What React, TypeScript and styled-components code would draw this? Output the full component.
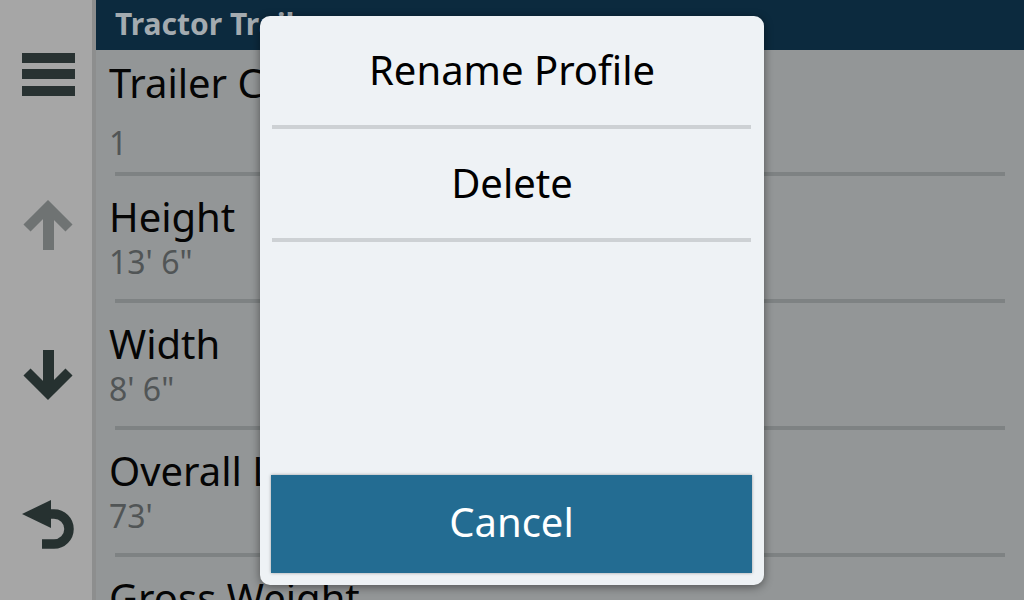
import React from 'react';
import styled, { createGlobalStyle } from 'styled-components';

const GlobalStyle = createGlobalStyle`
  html, body {
    margin: 0;
    padding: 0;
    background: #939697;
  }
  body {
    font-family: "Noto Sans", "DejaVu Sans", sans-serif;
  }
`;

type Field = { label: string; value: string };

const fields: Field[] = [
  { label: 'Trailer Count', value: '1' },
  { label: 'Height', value: `13' 6"` },
  { label: 'Width', value: `8' 6"` },
  { label: 'Overall Length', value: `73'` },
  { label: 'Gross Weight', value: '80,000 lb' },
];

const MenuIcon = () => (
  <svg width="54" height="44" viewBox="0 0 54 44">
    <rect x="1" y="0" width="53" height="10" fill="#283232" />
    <rect x="1" y="16" width="53" height="10" fill="#283232" />
    <rect x="1" y="33" width="53" height="10" fill="#283232" />
  </svg>
);

const UpIcon = () => (
  <svg width="54" height="54" viewBox="0 0 54 54">
    <path d="M6 30 L27 9 L48 30" fill="none" stroke="#6f7373" strokeWidth="10" strokeLinejoin="miter" />
    <path d="M27.5 12 V52" stroke="#6f7373" strokeWidth="11" />
  </svg>
);

const DownIcon = () => (
  <svg width="54" height="54" viewBox="0 0 54 54">
    <path d="M6 24 L27 45 L48 24" fill="none" stroke="#263130" strokeWidth="10" strokeLinejoin="miter" />
    <path d="M27.5 2 V42" stroke="#263130" strokeWidth="11" />
  </svg>
);

const BackIcon = () => (
  <svg width="58" height="54" viewBox="0 0 58 54">
    <path d="M3 16 L32 2 L32 30 Z" fill="#263130" />
    <path d="M30 16 H35 A15 15 0 0 1 35 46 H23" fill="none" stroke="#263130" strokeWidth="9.5" />
  </svg>
);

const App: React.FC = () => {
  return (
    <>
      <GlobalStyle />
      <Screen>
        <Sidebar>
          <SideButton><MenuIcon /></SideButton>
          <SideButton><UpIcon /></SideButton>
          <SideButton><DownIcon /></SideButton>
          <SideButton><BackIcon /></SideButton>
        </Sidebar>
        <Main>
          <Header>Tractor Trailer</Header>
          <List>
            {fields.map((f, i) => (
              <Row key={f.label} $first={i === 0}>
                <Label>{f.label}</Label>
                <Value $first={i === 0}>{f.value}</Value>
              </Row>
            ))}
          </List>
        </Main>
        <Dialog>
          <Option>Rename Profile</Option>
          <Divider />
          <Option>Delete</Option>
          <Divider />
          <Spacer />
          <CancelButton>Cancel</CancelButton>
        </Dialog>
      </Screen>
    </>
  );
};

export default App;

const Screen = styled.div`
  position: relative;
  width: 1024px;
  height: 600px;
  overflow: hidden;
  display: flex;
`;

const Sidebar = styled.div`
  width: 92px;
  flex-shrink: 0;
  background: #a6a6a6;
  border-right: 4px solid #8d8e8e;
  display: flex;
  flex-direction: column;
`;

const SideButton = styled.div`
  height: 150px;
  display: flex;
  align-items: center;
  justify-content: center;
  padding-left: 3px;
`;

const Main = styled.div`
  flex: 1;
  display: flex;
  flex-direction: column;
  background: #939697;
`;

const Header = styled.div`
  height: 50px;
  flex-shrink: 0;
  background: #0c2a3e;
  color: #a4abb0;
  font-weight: 700;
  font-size: 30px;
  line-height: 48px;
  padding-left: 19px;
  white-space: nowrap;
`;

const List = styled.div`
  display: flex;
  flex-direction: column;
`;

const Row = styled.div<{ $first?: boolean }>`
  display: flex;
  flex-direction: column;
  padding: ${p => (p.$first ? '8px 0 9px 13px' : '16px 0 17px 13px')};
  margin-bottom: 4px;
  position: relative;
  &::after {
    content: '';
    position: absolute;
    left: 19px;
    right: 19px;
    bottom: -4px;
    height: 4px;
    background: #7e8283;
  }
`;

const Label = styled.div`
  font-size: 40px;
  line-height: 50px;
  color: #050505;
  white-space: nowrap;
`;

const Value = styled.div<{ $first?: boolean }>`
  font-size: 32px;
  line-height: 40px;
  color: #515556;
  margin-top: ${p => (p.$first ? '15px' : '0')};
`;

const Dialog = styled.div`
  position: absolute;
  left: 260px;
  top: 16px;
  width: 504px;
  height: 569px;
  background: #eef2f5;
  border-radius: 10px;
  box-shadow: 0 2px 10px rgba(0, 0, 0, 0.45);
  display: flex;
  flex-direction: column;
`;

const Option = styled.div`
  height: 109px;
  box-sizing: border-box;
  padding-bottom: 3px;
  display: flex;
  align-items: center;
  justify-content: center;
  font-size: 40px;
  color: #000;
`;

const Divider = styled.div`
  height: 4px;
  margin: 0 13px 0 12px;
  background: #cdd1d4;
`;

const Spacer = styled.div`
  flex: 1;
`;

const CancelButton = styled.div`
  height: 98px;
  box-sizing: border-box;
  padding-bottom: 5px;
  margin: 0 12px 12px 11px;
  background: #236c92;
  box-shadow: 0 0 3px rgba(0, 0, 0, 0.35);
  display: flex;
  align-items: center;
  justify-content: center;
  font-size: 40px;
  color: #ffffff;
`;
